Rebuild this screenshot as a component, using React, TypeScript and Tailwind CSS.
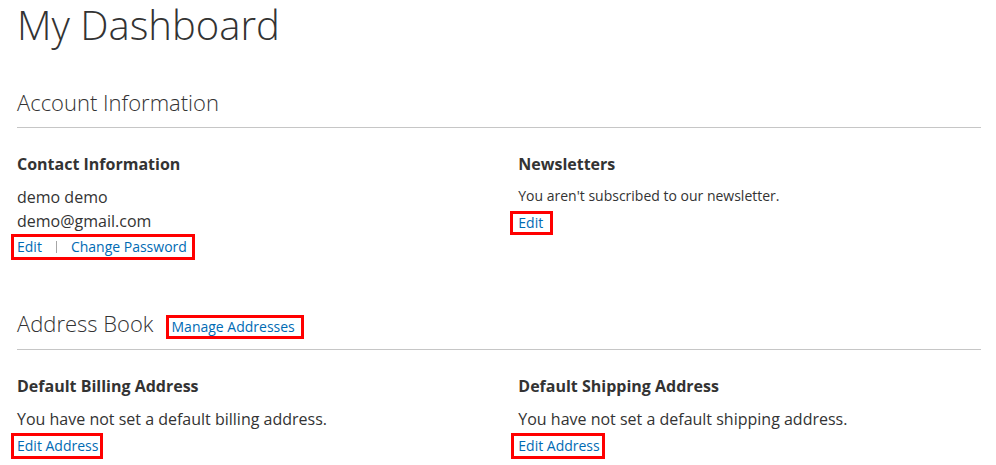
export default function App() {
  return (
    <div className="min-h-screen bg-white pl-[17px] pr-[15px] font-['Open_Sans',sans-serif] text-[#333]">
      <h1 className="text-[40px] font-light leading-[49px]">My Dashboard</h1>

      {/* Account Information */}
      <section className="mt-[39px]">
        <div className="border-b border-[#c6c6c6] pb-[11px] mb-[26px]">
          <h2 className="text-[22px] font-light leading-[28px]">Account Information</h2>
        </div>
        <div className="grid grid-cols-[48%_48%] justify-between">
          <div>
            <h3 className="text-[16px] font-bold leading-[20px]">Contact Information</h3>
            <p className="mt-[11px] text-[16px] leading-[24px]">
              demo demo
              <br />
              demo@gmail.com
            </p>
            <div className="mt-[1px] -ml-[6px] inline-flex items-center border-[3px] border-[#ff0000] pl-[3px] pr-[5px] text-[14px] leading-[20px]">
              <a href="#" className="text-[#006bb4]">Edit</a>
              <span className="mx-[14px] inline-block h-[12px] w-px bg-[#a6a6a6]" />
              <a href="#" className="text-[#006bb4]">Change Password</a>
            </div>
          </div>
          <div>
            <h3 className="text-[16px] font-bold leading-[20px]">Newsletters</h3>
            <p className="mt-[12px] text-[14px] leading-[20px]">You aren't subscribed to our newsletter.</p>
            <a
              href="#"
              className="mt-[5px] -ml-[8px] inline-block border-[3px] border-[#ff0000] pl-[5px] pr-[7px] text-[14px] leading-[18px] text-[#006bb4]"
            >
              Edit
            </a>
          </div>
        </div>
      </section>

      {/* Address Book */}
      <section className="mt-[49px]">
        <div className="flex items-baseline border-b border-[#c6c6c6] pb-[10px] mb-[26px]">
          <h2 className="text-[22px] font-light leading-[28px]">Address Book</h2>
          <a
            href="#"
            className="ml-[12px] inline-block border-[3px] border-[#ff0000] pl-[3px] pr-[6px] text-[14px] leading-[18px] text-[#006bb4]"
          >
            Manage Addresses
          </a>
        </div>
        <div className="grid grid-cols-[48%_48%] justify-between">
          <div>
            <h3 className="text-[16px] font-bold leading-[20px]">Default Billing Address</h3>
            <p className="mt-[11px] text-[16px] leading-[24px]">You have not set a default billing address.</p>
            <a
              href="#"
              className="mt-[2px] -ml-[6px] inline-block border-[3px] border-[#ff0000] pl-[3px] pr-[2px] text-[14px] leading-[20px] text-[#006bb4]"
            >
              Edit Address
            </a>
          </div>
          <div>
            <h3 className="text-[16px] font-bold leading-[20px]">Default Shipping Address</h3>
            <p className="mt-[11px] text-[16px] leading-[24px]">You have not set a default shipping address.</p>
            <a
              href="#"
              className="mt-[2px] -ml-[7px] inline-block border-[3px] border-[#ff0000] pl-[4px] pr-[2px] text-[14px] leading-[20px] text-[#006bb4]"
            >
              Edit Address
            </a>
          </div>
        </div>
      </section>
    </div>
  );
}
